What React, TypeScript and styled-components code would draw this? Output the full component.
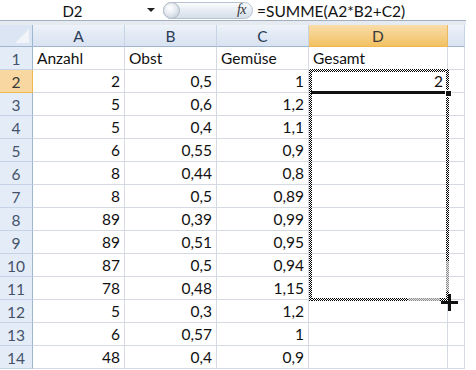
import * as React from "react";
import styled, { createGlobalStyle } from "styled-components";

const GlobalStyle = createGlobalStyle`
  html, body {
    margin: 0;
    padding: 0;
    background: #ffffff;
  }
  body {
    font-family: Lato, "Open Sans", "Liberation Sans", sans-serif;
    overflow: hidden;
  }
`;

const COLS = [
  { name: "A", width: 92 },
  { name: "B", width: 92 },
  { name: "C", width: 92 },
  { name: "D", width: 139 },
  { name: "", width: 17 },
];

const HEADER_W = 33;
const ROW_H = 23;
const HEAD_H = 22;

const rows: string[][] = [
  ["Anzahl", "Obst", "Gemüse", "Gesamt"],
  ["2", "0,5", "1", "2"],
  ["5", "0,6", "1,2", ""],
  ["5", "0,4", "1,1", ""],
  ["6", "0,55", "0,9", ""],
  ["8", "0,44", "0,8", ""],
  ["8", "0,5", "0,89", ""],
  ["89", "0,39", "0,99", ""],
  ["89", "0,51", "0,95", ""],
  ["87", "0,5", "0,94", ""],
  ["78", "0,48", "1,15", ""],
  ["5", "0,3", "1,2", ""],
  ["6", "0,57", "1", ""],
  ["48", "0,4", "0,9", ""],
];

const Sheet = styled.div`
  width: 466px;
  background: #fff;
`;

const FormulaBar = styled.div`
  height: 20px;
  display: flex;
  align-items: center;
  background: #fff;
  border-bottom: 1px solid #a3afbf;
`;

const NameBox = styled.div`
  width: 145px;
  text-align: center;
  font-size: 15px;
  color: #111;
  padding-top: 1px;
`;

const DropArrow = styled.div`
  width: 0;
  height: 0;
  margin-left: 2px;
  border-left: 4px solid transparent;
  border-right: 4px solid transparent;
  border-top: 4px solid #222;
`;

const Pill = styled.div`
  margin-left: 8px;
  width: 90px;
  height: 17px;
  box-sizing: border-box;
  border: 1px solid #b7c2d0;
  border-radius: 9px;
  background: linear-gradient(#fbfcfe, #e3e9f1 60%, #d7dfe9);
  display: flex;
  align-items: center;
  justify-content: space-between;
  padding-right: 6px;
`;

const Knob = styled.div`
  width: 17px;
  height: 17px;
  margin-left: -1px;
  box-sizing: border-box;
  border-radius: 50%;
  border: 1px solid #b0bac8;
  background: radial-gradient(circle at 40% 35%, #ffffff 0, #e6ebf1 45%, #b9c3cf 100%);
`;

const Fx = styled.span`
  font-family: "Liberation Serif", serif;
  font-style: italic;
  font-size: 14px;
  color: #333;
  letter-spacing: -0.5px;
`;

const Formula = styled.div`
  margin-left: 4px;
  font-size: 15.5px;
  color: #111;
  padding-top: 1px;
`;

const Gap = styled.div`
  height: 4px;
  background: #e6ebf2;
`;

const GridWrap = styled.div`
  position: relative;
`;

const Grid = styled.div`
  display: grid;
  grid-template-columns: ${HEADER_W}px ${COLS.map((c) => c.width + "px").join(" ")};
  grid-template-rows: ${HEAD_H}px;
  grid-auto-rows: ${ROW_H}px;
`;

const Corner = styled.div`
  position: relative;
  box-sizing: border-box;
  background: #dbe5f3;
  border-right: 1px solid #9eb6ce;
  border-bottom: 1px solid #9eb6ce;
  overflow: hidden;

  &::after {
    content: "";
    position: absolute;
    right: 3px;
    bottom: 3px;
    width: 0;
    height: 0;
    border-left: 14px solid transparent;
    border-bottom: 14px solid #f1f4f9;
  }
`;

const ColHead = styled.div<{ $active?: boolean }>`
  box-sizing: border-box;
  display: flex;
  align-items: center;
  justify-content: center;
  font-size: 15.5px;
  color: ${(p) => (p.$active ? "#3a3a3a" : "#2c3d57")};
  background: ${(p) =>
    p.$active
      ? "linear-gradient(#f9dca8, #f6cf88 50%, #f2c261)"
      : "linear-gradient(#eef3f9, #e1e9f4 50%, #d9e3f1)"};
  border-right: 1px solid ${(p) => (p.$active ? "#e9b860" : "#c5d3e4")};
  border-bottom: 1px solid ${(p) => (p.$active ? "#f0b64f" : "#9eb6ce")};
`;

const RowHead = styled.div<{ $active?: boolean }>`
  box-sizing: border-box;
  display: flex;
  align-items: center;
  justify-content: center;
  font-size: 15.5px;
  padding-top: 2px;
  color: ${(p) => (p.$active ? "#3a3a3a" : "#44536b")};
  background: ${(p) => (p.$active ? "#f8d8a0" : "#e4ecf7")};
  border-right: 1px solid ${(p) => (p.$active ? "#f0b64f" : "#9eb6ce")};
  border-bottom: 1px solid ${(p) => (p.$active ? "#f0b64f" : "#c5d3e4")};
`;

const Cell = styled.div<{ $num?: boolean }>`
  box-sizing: border-box;
  display: flex;
  align-items: flex-end;
  justify-content: ${(p) => (p.$num ? "flex-end" : "flex-start")};
  padding: 0 4px 2px 4px;
  font-size: 15.5px;
  color: #111;
  border-right: 1px solid #d4d9e2;
  border-bottom: 1px solid #d4d9e2;
  white-space: nowrap;
`;

const Ants = styled.div<{ $side: "top" | "bottom" | "left" | "right" }>`
  position: absolute;
  background: repeating-conic-gradient(#000 0 25%, #ffffff 0 50%) 0 0 / 2px 2px;
  ${(p) =>
    p.$side === "top"
      ? "left: 309px; top: 44px; width: 140px; height: 3px;"
      : p.$side === "bottom"
      ? "left: 309px; top: 273px; width: 140px; height: 3px;"
      : p.$side === "left"
      ? "left: 309px; top: 44px; width: 3px; height: 232px;"
      : "left: 446px; top: 44px; width: 3px; height: 232px;"}
`;

const FadedAnts = styled.div<{ $vertical?: boolean }>`
  position: absolute;
  background: repeating-conic-gradient(#8a8a8a 0 25%, #e8e8e8 0 50%) 0 0 / 2px 2px;
  ${(p) =>
    p.$vertical
      ? "left: 446px; top: 236px; width: 3px; height: 30px;"
      : "left: 408px; top: 273px; width: 32px; height: 3px;"}
`;

const ActiveEdge = styled.div`
  position: absolute;
  left: 311px;
  top: 66px;
  width: 136px;
  height: 3px;
  background: #111;
`;

const Handle = styled.div`
  position: absolute;
  left: 445px;
  top: 65px;
  width: 5px;
  height: 5px;
  background: #111;
  border: 1px solid #fff;
`;

const Cross = styled.div`
  position: absolute;
  left: 441px;
  top: 269px;
  width: 17px;
  height: 17px;

  &::before,
  &::after {
    content: "";
    position: absolute;
    background: #111;
  }
  &::before {
    left: 7px;
    top: 0;
    width: 3px;
    height: 17px;
  }
  &::after {
    left: 0;
    top: 7px;
    width: 17px;
    height: 3px;
  }
`;

const isNum = (v: string) => /^[0-9,]+$/.test(v);

const App = () => {
  return (
    <Sheet>
      <GlobalStyle />
      <FormulaBar>
        <NameBox>D2</NameBox>
        <DropArrow />
        <Pill>
          <Knob />
          <Fx>fx</Fx>
        </Pill>
        <Formula>=SUMME(A2*B2+C2)</Formula>
      </FormulaBar>
      <Gap />
      <GridWrap>
        <Grid>
          <Corner />
          {COLS.map((c) => (
            <ColHead key={"h" + c.name} $active={c.name === "D"}>
              {c.name}
            </ColHead>
          ))}
          {rows.map((r, i) => (
            <React.Fragment key={i}>
              <RowHead $active={i === 1}>{i + 1}</RowHead>
              {COLS.map((c, j) => {
                const v = r[j] ?? "";
                return (
                  <Cell key={c.name + j} $num={isNum(v)}>
                    {v}
                  </Cell>
                );
              })}
            </React.Fragment>
          ))}
        </Grid>
        <Ants $side="top" />
        <Ants $side="bottom" />
        <Ants $side="left" />
        <Ants $side="right" />
        <FadedAnts $vertical />
        <FadedAnts />
        <ActiveEdge />
        <Handle />
        <Cross />
      </GridWrap>
    </Sheet>
  );
};

export default App;
